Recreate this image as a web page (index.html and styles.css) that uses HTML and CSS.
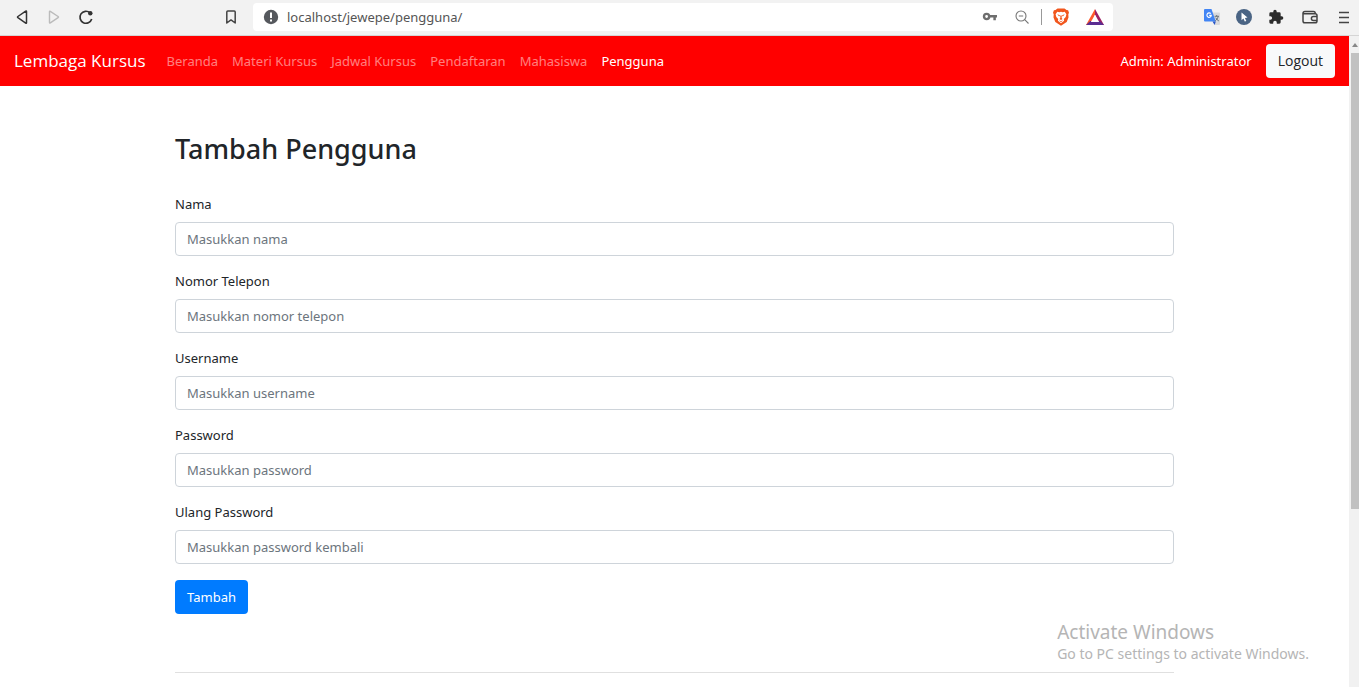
FILE: index.html
```html
<!DOCTYPE html>
<html lang="id">
<head>
<meta charset="utf-8">
<meta name="viewport" content="width=device-width, initial-scale=1">
<title>Tambah Pengguna</title>
<link rel="stylesheet" href="styles.css">
</head>
<body>
<header class="browser">
  <div class="browser-nav">
    <button class="icon-btn" type="button" aria-label="Kembali"><svg width="16" height="16" viewBox="0 0 16 16" fill="none" stroke="#333" stroke-width="1.5" stroke-linejoin="round"><path d="M12.500 2.400v11.400q0 .8-.8.3L3.900 8.700q-.8-.6 0-1.200l7.800-5.400q.8-.5.8.3z"/></svg></button>
    <button class="icon-btn" type="button" aria-label="Maju"><svg width="16" height="16" viewBox="0 0 16 16" fill="none" stroke="#bbb" stroke-width="1.4" stroke-linejoin="round"><path d="M3.500 2.600v11q0 .8.8.3l7.800-5.200q.8-.6 0-1.200L4.300 2.300q-.8-.5-.8.3z"/></svg></button>
    <button class="icon-btn" type="button" aria-label="Muat ulang"><svg width="16" height="16" viewBox="0 0 16 16" fill="none" stroke="#333" stroke-width="1.7"><path d="M12 3.800A6 6 0 1 0 13.700 10"/><circle cx="12.300" cy="4.300" r="2.200" fill="#333" stroke="none"/></svg></button>
  </div>
  <button class="icon-btn" type="button" aria-label="Markah"><svg width="16" height="16" viewBox="0 0 16 16" fill="none" stroke="#444" stroke-width="1.5" stroke-linejoin="round"><path d="M3.800 3q0-1 1-1h6.400q1 0 1 1v11L8 10.900 3.800 14z"/></svg></button>
  <div class="address">
    <svg width="16" height="16" viewBox="0 0 16 16"><circle cx="8" cy="8" r="7.200" fill="#55585d"/><path d="M7 3.600h2V9H7zM7 10.400h2v2H7z" fill="#fff"/></svg>
    <input class="address-input" type="text" aria-label="Alamat" value="localhost/jewepe/pengguna/">
    <svg class="key" width="16" height="16" viewBox="0 0 16 16" fill="none" stroke="#6e6e6e"><circle cx="4.600" cy="7.500" r="2.600" stroke-width="2.400"/><path d="M7.500 7.300H15M12.600 7.300v4" stroke-width="2.500"/></svg>
    <svg class="lens" width="16" height="16" viewBox="0 0 16 16" fill="none" stroke="#777" stroke-width="1.100"><circle cx="7" cy="7" r="5"/><path d="M10.700 10.700L14.500 14.500M4.800 7h4.400"/></svg>
    <span class="divider"></span>
    <svg class="brave" width="18" height="18" viewBox="0 0 18 18"><path d="M5.500.5h7L14.500 2l1.600.3.900 2.400-.7 1.500.2 3.300-1.800 4.600L9 17.800l-5.700-3.700-1.800-4.600.2-3.300L1 4.700l.9-2.400L3.500 2z" fill="#f1561d"/><path d="M5.300 3.800l2 .5L9 3.700l1.700.6 2-.5 1.700 2.400-.7 2.700-1.900 2.200.3 1.700L9 15.300l-3.100-2.500.3-1.700-1.900-2.200-.7-2.700z" fill="#fff"/><path d="M5.200 6.300l2.800.9-.8 1.300zM12.800 6.300l-2.800.9.800 1.300zM8.200 7.400h1.600l-.2 2.600.9.900L9 12l-1.500-1.100.9-.9zM6.800 12.200L9 13.300l2.200-1.100L9 14.200z" fill="#f1561d"/></svg>
    <svg width="18" height="18" viewBox="0 0 18 18"><path d="M9 1L0 17h5.500L9 6.500z" fill="#ff5a2d"/><path d="M9 1l9 16h-5L9 6.500z" fill="#9e1f63"/><path d="M0 17l4.300-4h9.400L18 17z" fill="#5b2d91"/><path d="M9 6.800L13.200 14H4.800z" fill="#fff"/></svg>
  </div>
  <div class="extensions">
    <button class="icon-btn" type="button" aria-label="Terjemahan"><svg width="16" height="16" viewBox="0 0 16 16"><path d="M7 3.500h8q1 0 1 1V15q0 1-1 1h-4z" fill="#d9dadc"/><path d="M1 0h6.500l4.300 12.500H1q-1 0-1-1V1q0-1 1-1z" fill="#4285f4"/><path d="M8.500 12.500h3.300L10.600 16z" fill="#2a56c6"/><path d="M6.800 4.700A2.200 2.200 0 1 0 7.300 6.400H5.200" fill="none" stroke="#fff" stroke-width="1.100"/><path d="M10.600 7.300H15M12.700 6v1.300M14.300 7.500q-.7 2.600-3 4.300M11.700 8.700q1 2 3.200 3.300" fill="none" stroke="#6b7478"/></svg></button>
    <button class="icon-btn" type="button" aria-label="Penunjuk"><svg width="16" height="16" viewBox="0 0 16 16"><circle cx="8" cy="8" r="8" fill="#4a6484"/><path d="M5.500 3.500l6 5.100-2.600.3 1.400 3-1.500.7-1.400-3-1.900 1.700z" fill="#fff"/></svg></button>
    <button class="icon-btn" type="button" aria-label="Ekstensi"><svg width="16" height="16" viewBox="0 0 24 24" fill="#2c2c2c"><path d="M20.500 11H19V7a2 2 0 0 0-2-2h-4V3.500a2.500 2.500 0 0 0-5 0V5H4a2 2 0 0 0-2 2v3.800h1.500a2.700 2.700 0 0 1 0 5.400H2V20a2 2 0 0 0 2 2h3.800v-1.500a2.700 2.700 0 0 1 5.400 0V22H17a2 2 0 0 0 2-2v-4h1.500a2.500 2.500 0 0 0 0-5z"/></svg></button>
    <button class="icon-btn" type="button" aria-label="Dompet"><svg width="16" height="16" viewBox="0 0 16 16" fill="none" stroke="#444" stroke-width="1.500"><path d="M1 4.500q0-2 2-2h8.500q1.800 0 1.800 2.200M1 4v8q0 1.800 1.800 1.800h10.400q1.800 0 1.800-1.800V6.600q0-1.800-1.800-1.800H1.500"/><path d="M15 7.500h-3.600a2 2 0 0 0 0 4H15"/></svg></button>
    <button class="icon-btn" type="button" aria-label="Menu"><svg width="16" height="16" viewBox="0 0 16 16" stroke="#444" stroke-width="1.500"><path d="M3 3.500h10M3 8.500h10M3 13.500h10"/></svg></button>
  </div>
</header>

<div class="viewport">
  <div class="page">
    <nav class="navbar">
      <a class="brand" href="#">Lembaga Kursus</a>
      <div class="links">
        <a class="link" href="#">Beranda</a>
        <a class="link" href="#">Materi Kursus</a>
        <a class="link" href="#">Jadwal Kursus</a>
        <a class="link" href="#">Pendaftaran</a>
        <a class="link" href="#">Mahasiswa</a>
        <a class="link active" href="#">Pengguna</a>
      </div>
      <span class="admin">Admin: Administrator</span>
      <button class="btn btn-light" type="button">Logout</button>
    </nav>
    <main class="container">
      <h1 class="title">Tambah Pengguna</h1>
      <form class="form">
        <div class="field"><label class="label" for="nama">Nama</label><input class="control" id="nama" type="text" placeholder="Masukkan nama"></div>
        <div class="field"><label class="label" for="telepon">Nomor Telepon</label><input class="control" id="telepon" type="text" placeholder="Masukkan nomor telepon"></div>
        <div class="field"><label class="label" for="username">Username</label><input class="control" id="username" type="text" placeholder="Masukkan username"></div>
        <div class="field"><label class="label" for="password">Password</label><input class="control" id="password" type="password" placeholder="Masukkan password"></div>
        <div class="field"><label class="label" for="ulang">Ulang Password</label><input class="control" id="ulang" type="password" placeholder="Masukkan password kembali"></div>
        <button class="btn btn-primary" type="submit">Tambah</button>
      </form>
      <hr class="rule">
    </main>
  </div>
  <div class="scrollbar"><span class="arrow"></span><span class="thumb"></span></div>
</div>

<div class="activation">
  <p class="activation-title">Activate Windows</p>
  <p class="activation-text">Go to PC settings to activate Windows.</p>
</div>
</body>
</html>
```

FILE: styles.css
```css
* { box-sizing: border-box; }

body {
  display: flex;
  flex-direction: column;
  height: 100vh;
  margin: 0;
  overflow: hidden;
  font: 13px/22px "Noto Sans", "Open Sans", sans-serif;
  color: #212529;
  background: #fff;
}

a { text-decoration: none; }
svg { display: block; flex: none; }
button, input { font: inherit; }

/* Browser toolbar */
.browser {
  display: flex;
  flex: none;
  align-items: center;
  height: 36px;
  padding: 0 7px 2px 14px;
  background: #f2f2f2;
  border-bottom: 1px solid #d5d5d5;
}
.browser-nav { display: flex; gap: 16px; margin-right: 129px; }
.icon-btn { padding: 0; border: 0; background: none; }
.address {
  display: flex;
  flex: 1;
  align-items: center;
  height: 28px;
  margin: 0 91px 0 14px;
  padding: 0 9px 0 10px;
  border-radius: 4px;
  background: #fff;
}
.address-input {
  flex: 1;
  min-width: 0;
  margin-left: 8px;
  padding: 0;
  border: 0;
  outline: 0;
  color: #555;
  background: none;
}
.lens { margin-left: 16px; }
.divider { width: 1px; height: 16px; margin: 0 10px 0 11px; background: #999; }
.brave { margin-right: 16px; }
.extensions { display: flex; gap: 16px; }
.extensions .icon-btn:nth-child(n+4) { margin-left: 2px; }

/* Page and scrollbar */
.viewport { display: flex; flex: 1; min-height: 0; }
.page { flex: 1; min-width: 0; overflow: hidden; }
.scrollbar {
  display: flex;
  flex: none;
  flex-direction: column;
  align-items: flex-end;
  width: 10px;
  background: #f1f1f1;
}
.arrow {
  margin: 7px 1px 6px;
  border: 3px solid transparent;
  border-top: 0;
  border-bottom: 4px solid #888;
}
.thumb { width: 8px; height: 70%; background: #c1c1c1; }

/* Navbar */
.navbar {
  display: flex;
  align-items: center;
  padding: 7px 14px;
  background: #f00;
}
.brand { margin-right: 14px; font-family: "Open Sans", sans-serif; font-size: 17px; color: #fff; }
.links { display: flex; flex: 1; }
.link { padding: 7px; color: rgba(255, 255, 255, .5); }
.link.active { color: #fff; }
.admin { margin-right: 14px; color: #fff; }

.btn {
  padding: 5px 11px;
  border: 1px solid transparent;
  border-radius: 4px;
}
.btn-light {
  font-family: "Open Sans", sans-serif;
  font-size: 14px;
  color: #212529;
  background: #f8f9fa;
}
.btn-primary { align-self: flex-start; margin-top: 2px; color: #fff; background: #007bff; }

/* Form */
.container { max-width: 1027px; margin: 0 auto; padding: 45px 14px; }
.title { margin: 0 0 27px; font-size: 27px; line-height: 35px; font-weight: 500; }
.form { display: flex; flex-direction: column; gap: 14px; }
.field { display: flex; flex-direction: column; gap: 7px; }
.control {
  height: 34px;
  padding: 5px 11px;
  border: 1px solid #ced4da;
  border-radius: 4px;
  color: #495057;
  background: #fff;
}
.control::placeholder { color: #6c757d; opacity: 1; }
.rule { margin: 58px 0 0; border: 0; border-top: 1px solid #e0e0e0; }

/* System notice over the desktop */
.activation { position: absolute; right: 50px; bottom: 22px; color: #b5b5b5; }
.activation-title, .activation-text { margin: 0; }
.activation-title { font-size: 19px; }
.activation-text { font-size: 14px; }
```
